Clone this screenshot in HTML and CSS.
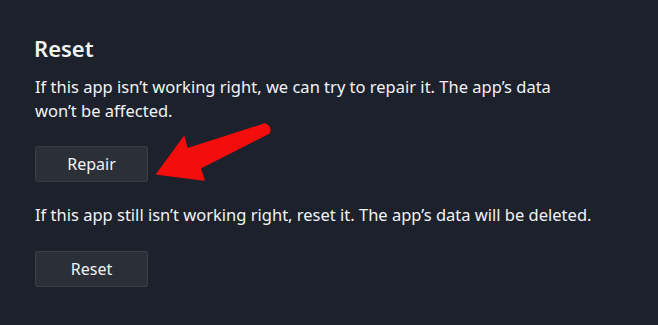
FILE: index.html
```html
<!DOCTYPE html>
<html lang="en">
<head>
    <meta charset="UTF-8">
    <title>Reset</title>
    <link rel="stylesheet" href="styles.css">
</head>
<body>
    <section class="reset">
        <h2 class="title">Reset</h2>
        <p class="desc">If this app isn’t working right, we can try to repair it. The app’s data won’t be affected.</p>
        <button class="btn first">Repair</button>
        <p class="desc second">If this app still isn’t working right, reset it. The app’s data will be deleted.</p>
        <button class="btn last">Reset</button>
    </section>
    <!-- red annotation arrow pointing at the Repair button -->
    <svg class="arrow" width="658" height="325" viewBox="0 0 658 325">
        <path d="M157 174 L184 137 L187 149 L265 124 Q272 127 269 133 L200 168 L204 180 Z" fill="#f40d0d" stroke="#f40d0d" stroke-width="1.5" stroke-linejoin="round"/>
    </svg>
</body>
</html>
```

FILE: styles.css
```css
html, body {
    margin: 0;
    padding: 0;
}
body {
    background-color: #1c212b;
    color: #f2f3f5;
    font-family: "Noto Sans", "Open Sans", sans-serif;
    width: 658px;
    height: 325px;
    overflow: hidden;
    position: relative;
}
.reset {
    padding: 33px 0 0 35px;
}
.title {
    margin: 0 0 12px -1px;
    font-size: 22px;
    font-weight: 600;
    line-height: 30px;
}
.desc {
    margin: 0;
    width: 560px;
    font-size: 16.5px;
    line-height: 24px;
}
.second {
    margin-top: 21px;
}
.btn {
    display: block;
    width: 113px;
    height: 36px;
    background: #2a2f38;
    border: 1px solid #3a3f48;
    border-radius: 2px;
    color: #f2f3f5;
    font-family: inherit;
    font-size: 16px;
    padding: 0;
}
.btn.first {
    margin-top: 23px;
}
.btn.last {
    margin-top: 24px;
}
.arrow {
    position: absolute;
    left: 0;
    top: 0;
}
```
